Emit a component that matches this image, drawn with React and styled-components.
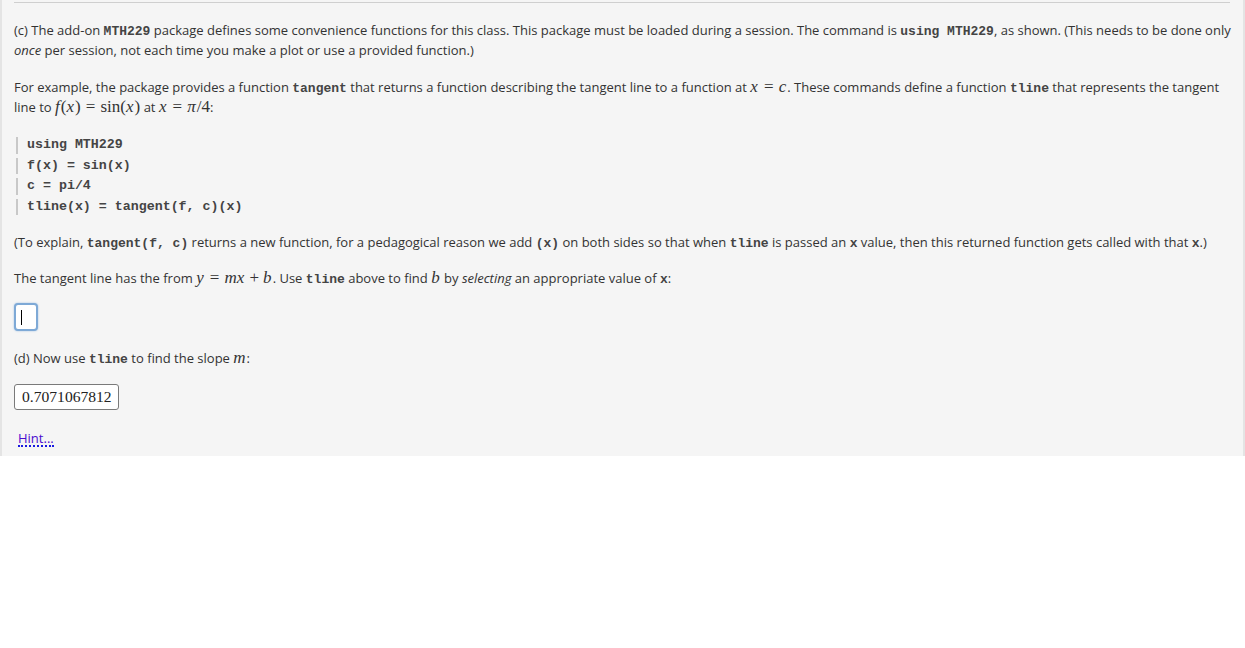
import styled, { createGlobalStyle } from 'styled-components';

const Global = createGlobalStyle`
body{
  margin:0;
  background:#fff;
  font-family:"Open Sans", "Noto Sans", sans-serif;
}
`;

const Panel = styled.div`
background:#f5f5f5;
border-left:2px solid #e4e4e4;
border-right:2px solid #e4e4e4;
width:1221px;
padding:2px 8px 6px 12px;
color:#333;
font-size:13px;
line-height:20px;
`;

const Rule = styled.hr`
border:none;
border-top:1px solid #cfcfcf;
margin:0 5px 0 0;
`;

const Para = styled.p`
margin:${(p) => p.top || 17}px 0 0 0;
`;

const Code = styled.code`
font-family:"Liberation Mono", monospace;
font-size:13px;
font-weight:bold;
line-height:1;
color:#444;
`;

const Math = styled.span`
font-family:"Liberation Serif", serif;
font-size:17px;
line-height:1;
white-space:nowrap;
`;

const Var = styled.i`
font-style:italic;
padding-right:0.06em;
`;

const Up = styled.span`
font-style:normal;
`;

const Rel = styled.span`
margin:0 ${(p) => (p.bin ? 0.24 : 0.3)}em;
`;

const CodeBlock = styled.div`
margin-top:20px;
display:flex;
flex-direction:column;
gap:4px;
`;

const CodeLine = styled.div`
font-family:"Liberation Mono", monospace;
font-size:13.3px;
font-weight:bold;
color:#444;
line-height:16.5px;
border-left:2px solid #c8c8c8;
padding-left:9px;
margin-left:2px;
white-space:pre;
`;

const FocusBox = styled.div`
margin-top:15px;
width:24px;
height:28px;
box-sizing:border-box;
border:2px solid #7ea9d6;
border-radius:4px;
background:#fff;
box-shadow:0 0 2px #9cbfe3;
display:flex;
align-items:center;
padding-left:5px;
`;

const Caret = styled.span`
width:1px;
height:15px;
background:#000;
`;

const Answer = styled.div`
margin-top:16px;
display:inline-block;
box-sizing:border-box;
height:26px;
border:1px solid #7a7a7a;
border-radius:3px;
background:#fff;
padding:1px 6px 0 7px;
font-family:"Liberation Serif", serif;
font-size:15.6px;
line-height:22px;
color:#222;
`;

const HintRow = styled.div`
margin-top:18px;
height:22px;
`;

const Hint = styled.a`
display:inline-block;
margin-left:4px;
color:#4a0ccf;
text-decoration:none;
border-bottom:2px dotted #1a1ae0;
line-height:14px;
`;

const Wrap = styled.span``;

export default function App() {
  return (
    <>
      <Global />
      <Panel>
        <Rule />
        <Para>
          (c) The add-on <Code>MTH229</Code> package defines some convenience functions for this class. This package must be loaded during a session. The command is <Code>using MTH229</Code>, as shown. (This needs to be done only <em>once</em> per session, not each time you make a plot or use a provided function.)
        </Para>
        <Para>
          For example, the package provides a function <Code>tangent</Code> that returns a function describing the tangent line to a function at{' '}
          <Math><Var>x</Var><Rel>=</Rel><Var>c</Var></Math>. These commands define a function <Code>tline</Code> that represents the tangent{' '}
          <Wrap>line to</Wrap>{' '}
          <Math>
            <Var>f</Var><Up>(</Up><Var>x</Var><Up>)</Up><Rel>=</Rel><Up>sin(</Up><Var>x</Var><Up>)</Up>
          </Math>{' '}<Wrap>at</Wrap>{' '}
          <Math><Var>x</Var><Rel>=</Rel><Var>π</Var><Up>/4</Up></Math>:
        </Para>
        <CodeBlock>
          <CodeLine>using MTH229</CodeLine>
          <CodeLine>f(x) = sin(x)</CodeLine>
          <CodeLine>c = pi/4</CodeLine>
          <CodeLine>tline(x) = tangent(f, c)(x)</CodeLine>
        </CodeBlock>
        <Para>
          (To explain, <Code>tangent(f, c)</Code> returns a new function, for a pedagogical reason we add <Code>(x)</Code> on both sides so that when <Code>tline</Code> is passed an <Code>x</Code> value, then this returned function gets called with that <Code>x</Code>.)
        </Para>
        <Para top={16}>
          The tangent line has the from <Math><Var>y</Var><Rel>=</Rel><Var>mx</Var><Rel bin>+</Rel><Var>b</Var></Math>. Use <Code>tline</Code> above to find <Math><Var>b</Var></Math> by <em>selecting</em> an appropriate value of <Code>x</Code>:
        </Para>
        <FocusBox>
          <Caret />
        </FocusBox>
        <Para>
          (d) Now use <Code>tline</Code> to find the slope <Math><Var>m</Var></Math>:
        </Para>
        <Answer>0.7071067812</Answer>
        <HintRow>
          <Hint>Hint...</Hint>
        </HintRow>
      </Panel>
    </>
  );
}
